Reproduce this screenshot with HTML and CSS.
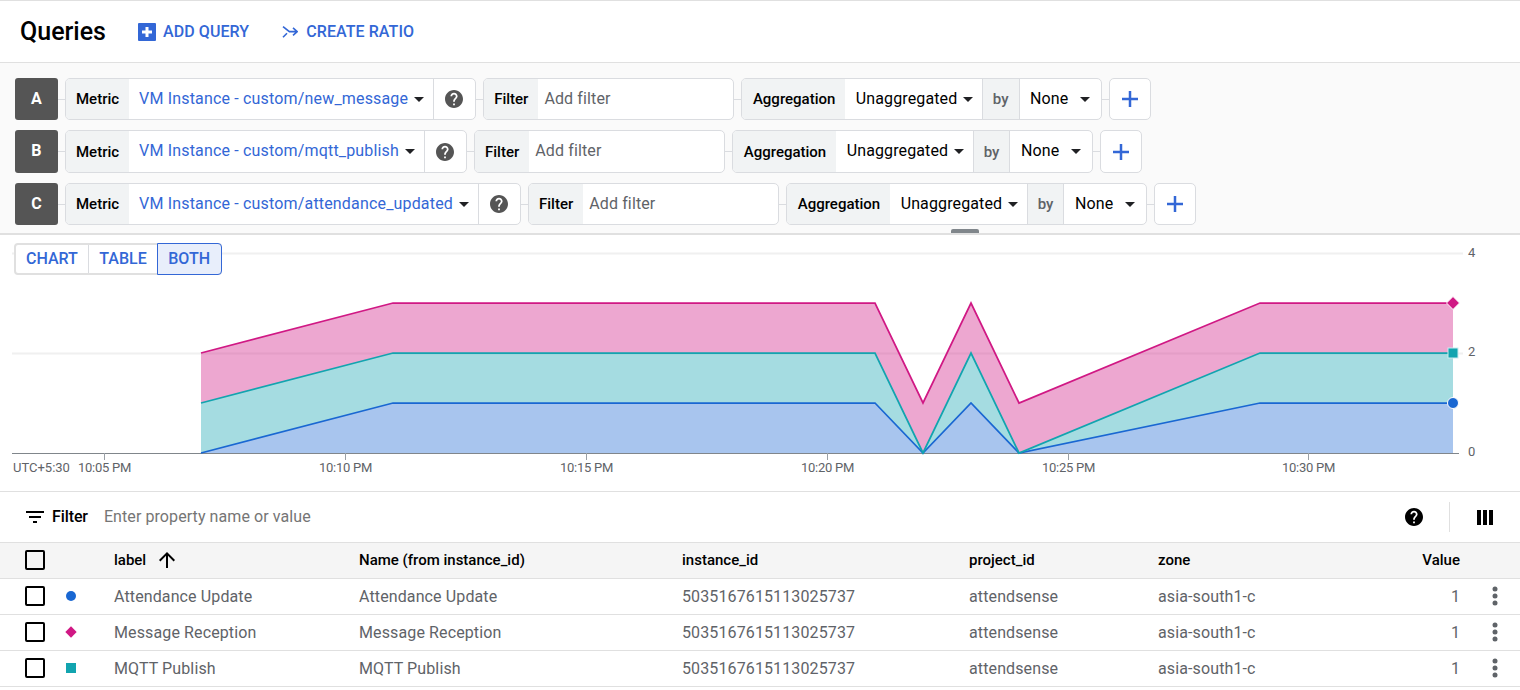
FILE: index.html
```html
<!DOCTYPE html>
<html>
<head>
    <meta charset="UTF-8">
    <meta name="viewport" content="width=device-width, initial-scale=1.0">
    <title>Queries</title>
    <link rel="stylesheet" href="styles.css">
</head>
<body>
    <svg class="defs" width="0" height="0">
        <symbol id="help" viewBox="2 2 20 20"><path d="M12 2C6.48 2 2 6.48 2 12s4.48 10 10 10 10-4.48 10-10S17.52 2 12 2zm1 17h-2v-2h2v2zm2.07-7.75l-.9.92C13.45 12.9 13 13.5 13 15h-2v-.5c0-1.1.45-2.1 1.17-2.83l1.24-1.26c.37-.36.59-.86.59-1.41 0-1.1-.9-2-2-2s-2 .9-2 2H8c0-2.21 1.79-4 4-4s4 1.79 4 4c0 .88-.36 1.68-.93 2.25z"/></symbol>
        <symbol id="plus" viewBox="0 0 18 18"><path d="M7.75 1h2.5v6.75H17v2.5h-6.75V17h-2.5v-6.75H1v-2.5h6.75z"/></symbol>
        <symbol id="kebab" viewBox="0 0 6 20"><circle cx="3" cy="3" r="2.5"/><circle cx="3" cy="10" r="2.5"/><circle cx="3" cy="17" r="2.5"/></symbol>
    </svg>

    <header class="top-bar">
        <h1>Queries</h1>
        <a class="top-action add-query">
            <svg class="add-icon" width="18" height="18" viewBox="0 0 18 18"><rect width="18" height="18" rx="1" fill="#3367d6"/><path d="M7.5 4h3v3.5H14v3h-3.5V14h-3v-3.5H4v-3h3.5z" fill="#fff"/></svg>
            ADD QUERY
        </a>
        <a class="top-action create-ratio">
            <svg class="ratio-icon" width="16" height="12" viewBox="0 0 16 12" fill="none" stroke="#3367d6" stroke-width="1.6"><path d="M1 .6 7.4 5.6H15M11 1.8l4.2 3.8L11 9.4M1 11.2l4-4"/></svg>
            CREATE RATIO
        </a>
    </header>

    <section class="queries">
        <div class="query-row">
            <span class="query-letter">A</span><span class="link"></span>
            <div class="group"><span class="tag">Metric</span><span class="select metric">VM Instance - custom/new_message<i class="caret"></i></span><span class="help-cell"><svg class="help-icon"><use href="#help"/></svg></span></div><span class="link"></span>
            <div class="group"><span class="tag">Filter</span><span class="filter-input">Add filter</span></div><span class="link"></span>
            <div class="group"><span class="tag tag-agg">Aggregation</span><span class="select">Unaggregated<i class="caret"></i></span><span class="tag tag-by">by</span><span class="select select-none">None<i class="caret"></i></span></div><span class="link"></span>
            <div class="group plus-box"><svg class="plus-icon"><use href="#plus"/></svg></div>
        </div>
        <div class="query-row row-tall">
            <span class="query-letter">B</span><span class="link"></span>
            <div class="group"><span class="tag">Metric</span><span class="select metric">VM Instance - custom/mqtt_publish<i class="caret"></i></span><span class="help-cell"><svg class="help-icon"><use href="#help"/></svg></span></div><span class="link"></span>
            <div class="group"><span class="tag">Filter</span><span class="filter-input">Add filter</span></div><span class="link"></span>
            <div class="group"><span class="tag tag-agg">Aggregation</span><span class="select">Unaggregated<i class="caret"></i></span><span class="tag tag-by">by</span><span class="select select-none">None<i class="caret"></i></span></div><span class="link"></span>
            <div class="group plus-box"><svg class="plus-icon"><use href="#plus"/></svg></div>
        </div>
        <div class="query-row">
            <span class="query-letter">C</span><span class="link"></span>
            <div class="group"><span class="tag">Metric</span><span class="select metric">VM Instance - custom/attendance_updated<i class="caret"></i></span><span class="help-cell"><svg class="help-icon"><use href="#help"/></svg></span></div><span class="link"></span>
            <div class="group"><span class="tag">Filter</span><span class="filter-input">Add filter</span></div><span class="link"></span>
            <div class="group"><span class="tag tag-agg">Aggregation</span><span class="select">Unaggregated<i class="caret"></i></span><span class="tag tag-by">by</span><span class="select select-none">None<i class="caret"></i></span></div><span class="link"></span>
            <div class="group plus-box"><svg class="plus-icon"><use href="#plus"/></svg></div>
        </div>
        <span class="drag-handle"></span>
    </section>

    <section class="chart">
        <div class="view-toggle">
            <span class="view-btn">CHART</span>
            <span class="view-btn">TABLE</span>
            <span class="view-btn active">BOTH</span>
        </div>
        <!-- y values in the chart are page y minus 235 -->
        <svg class="plot" width="1520" height="256" viewBox="0 0 1520 256">
            <path d="M12 18.5H1463M12 118.5H1463" stroke="#f0f0f0" stroke-width="2" fill="none"/>
            <polygon points="201,218 393,168 875,168 923,218 971,168 1019,218 1260,168 1453,168 1453,218" fill="#1967d2" fill-opacity=".38"/>
            <polygon points="201,168 393,118 875,118 923,218 971,118 1019,218 1260,118 1453,118 1453,168 1260,168 1019,218 971,168 923,218 875,168 393,168 201,218" fill="#12a4af" fill-opacity=".38"/>
            <polygon points="201,118 393,68 875,68 923,168 971,68 1019,168 1260,68 1453,68 1453,118 1260,118 1019,218 971,118 923,218 875,118 393,118 201,168" fill="#d01884" fill-opacity=".38"/>
            <path d="M12 218.5H1459" stroke="#80868b" stroke-width="1" fill="none"/>
            <path d="M104.5 218v7M345.5 218v7M586.5 218v7M827.5 218v7M1068.5 218v7M1308.5 218v7" stroke="#9aa0a6" fill="none"/>
            <polyline points="201,218 393,168 875,168 923,218 971,168 1019,218 1260,168 1453,168" stroke="#1967d2" stroke-width="1.75" fill="none"/>
            <polyline points="201,168 393,118 875,118 923,218 971,118 1019,218 1260,118 1453,118" stroke="#12a4af" stroke-width="1.75" fill="none"/>
            <polyline points="201,118 393,68 875,68 923,168 971,68 1019,168 1260,68 1453,68" stroke="#d01884" stroke-width="1.75" fill="none"/>
            <polygon points="1453,61.5 1459.5,68 1453,74.5 1446.5,68" fill="#d01884" stroke="#fff"/>
            <rect x="1448" y="113" width="10" height="10" fill="#12a4af" stroke="#c9ecef"/>
            <circle cx="1453" cy="168" r="5.5" fill="#1967d2" stroke="#fff"/>
            <g class="axis-text">
                <text x="13" y="237">UTC+5:30</text>
                <g class="time-text">
                    <text x="104.5" y="237" text-anchor="middle">10:05 PM</text>
                    <text x="345.5" y="237" text-anchor="middle">10:10 PM</text>
                    <text x="586.5" y="237" text-anchor="middle">10:15 PM</text>
                    <text x="827.5" y="237" text-anchor="middle">10:20 PM</text>
                    <text x="1068.5" y="237" text-anchor="middle">10:25 PM</text>
                    <text x="1308.5" y="237" text-anchor="middle">10:30 PM</text>
                </g>
                <text x="1468" y="22">4</text>
                <text x="1468" y="121">2</text>
                <text x="1468" y="221">0</text>
            </g>
        </svg>
    </section>

    <section class="filter-bar">
        <svg class="filter-icon" width="18" height="12" viewBox="3 6 18 12"><path d="M10 18h4v-2h-4v2zM3 6v2h18V6H3zm3 7h12v-2H6v2z"/></svg>
        <span class="filter-label">Filter</span>
        <span class="filter-hint">Enter property name or value</span>
        <svg class="bar-help"><use href="#help"/></svg>
        <span class="bar-divider"></span>
        <svg class="columns-icon" width="16" height="15" viewBox="0 0 16 15"><path d="M0 0h4v15H0zM6 0h4v15H6zM12 0h4v15h-4z"/></svg>
    </section>

    <table class="results">
        <thead>
            <tr>
                <th class="col-check"><span class="checkbox"></span></th>
                <th class="col-key"></th>
                <th class="col-label">label<svg class="sort-icon" width="16" height="16" viewBox="4 4 16 16"><path d="M4 12l1.41 1.41L11 7.83V20h2V7.83l5.58 5.59L20 12l-8-8-8 8z"/></svg></th>
                <th class="col-name">Name (from instance_id)</th>
                <th class="col-id">instance_id</th>
                <th class="col-project">project_id</th>
                <th class="col-zone">zone</th>
                <th class="col-value">Value</th>
                <th class="col-menu"></th>
            </tr>
        </thead>
        <tbody>
            <tr>
                <td><span class="checkbox"></span></td>
                <td><span class="key key-circle"></span></td>
                <td>Attendance Update</td>
                <td>Attendance Update</td>
                <td>5035167615113025737</td>
                <td>attendsense</td>
                <td>asia-south1-c</td>
                <td class="num">1</td>
                <td><svg class="kebab-icon"><use href="#kebab"/></svg></td>
            </tr>
            <tr>
                <td><span class="checkbox"></span></td>
                <td><span class="key key-diamond"></span></td>
                <td>Message Reception</td>
                <td>Message Reception</td>
                <td>5035167615113025737</td>
                <td>attendsense</td>
                <td>asia-south1-c</td>
                <td class="num">1</td>
                <td><svg class="kebab-icon"><use href="#kebab"/></svg></td>
            </tr>
            <tr>
                <td><span class="checkbox"></span></td>
                <td><span class="key key-square"></span></td>
                <td>MQTT Publish</td>
                <td>MQTT Publish</td>
                <td>5035167615113025737</td>
                <td>attendsense</td>
                <td>asia-south1-c</td>
                <td class="num">1</td>
                <td><svg class="kebab-icon"><use href="#kebab"/></svg></td>
            </tr>
        </tbody>
    </table>
</body>
</html>
```

FILE: styles.css
```css
body {
    margin: 0;
    background-color: #fff;
    color: #202124;
    font-family: Roboto, "Liberation Sans", sans-serif;
    font-size: 16px;
    letter-spacing: .12px;
    overflow: hidden;
}

.defs {
    position: absolute;
}

.top-bar {
    display: flex;
    align-items: center;
    height: 61px;
    padding-left: 20px;
    border-top: 1px solid #e0e0e0;
    border-bottom: 1px solid #e0e0e0;
}

.top-bar h1 {
    margin: 0 32px 0 0;
    font-size: 25px;
    font-weight: 500;
    letter-spacing: 0;
    color: #000;
}

.top-action {
    display: flex;
    align-items: center;
    gap: 7px;
    color: #3367d6;
    font-weight: 500;
    letter-spacing: .08px;
}

.add-query {
    margin-right: 33px;
}

.create-ratio {
    gap: 8px;
}

.queries {
    position: relative;
    display: flex;
    flex-direction: column;
    gap: 10px;
    height: 155px;
    padding: 15px 0 0 15px;
    background-color: #fafafa;
    border-bottom: 2px solid #e0e0e0;
}

.query-row {
    display: flex;
    height: 42px;
}

.row-tall {
    height: 43px;
}

.query-letter {
    display: flex;
    align-items: center;
    justify-content: center;
    width: 43px;
    padding-bottom: 2px;
    box-sizing: border-box;
    border-radius: 3px;
    background-color: #555;
    color: #fff;
    font-weight: 700;
}

.link {
    align-self: center;
    width: 7px;
    height: 1px;
    background-color: #dadce0;
}

.group {
    display: flex;
    box-sizing: border-box;
    border: 1px solid #dadce0;
    border-radius: 5px;
    background-color: #fff;
    overflow: hidden;
}

.tag {
    display: flex;
    align-items: center;
    padding: 0 10px;
    background-color: #f1f3f4;
    color: #000;
    font-size: 15px;
    font-weight: 500;
    letter-spacing: 0;
}

.tag-agg {
    padding: 0 9.5px 0 10.5px;
}

.tag-by {
    padding: 0 10px;
    border-left: 1px solid #dadce0;
    border-right: 1px solid #dadce0;
    color: #5f6368;
}

.select {
    display: flex;
    align-items: center;
    gap: 6px;
    padding: 0 8.5px 2px 11px;
    color: #000;
}

.select-none {
    gap: 12px;
    padding: 0 10.5px 2px 10.5px;
}

.metric {
    padding: 0 9px 2px 10px;
    color: #3367d6;
    letter-spacing: .17px;
}

.caret {
    width: 0;
    height: 0;
    margin-top: 2px;
    border-left: 5px solid transparent;
    border-right: 5px solid transparent;
    border-top: 5px solid #202124;
}

.help-cell {
    display: flex;
    align-items: center;
    justify-content: center;
    box-sizing: border-box;
    width: 42px;
    padding-right: 2px;
    border-left: 1px solid #dadce0;
}

.help-icon {
    width: 18px;
    height: 18px;
    fill: #555;
}

.filter-input {
    display: flex;
    align-items: center;
    width: 189px;
    padding: 0 0 2px 6px;
    color: #5f6368;
}

.plus-box {
    align-items: center;
    justify-content: center;
    width: 42px;
}

.plus-icon {
    width: 18px;
    height: 18px;
    fill: #3367d6;
}

.drag-handle {
    position: absolute;
    left: 951px;
    bottom: 0;
    width: 28px;
    height: 4px;
    border-radius: 2px 2px 0 0;
    background-color: #80868b;
}

.chart {
    position: relative;
    height: 256px;
    border-bottom: 1px solid #e0e0e0;
}

.plot {
    display: block;
}

.axis-text text {
    font-size: 13px;
    letter-spacing: 0;
    fill: #5f6368;
}

.axis-text .time-text text {
    letter-spacing: -.25px;
}

.view-toggle {
    position: absolute;
    left: 14px;
    top: 8px;
    display: flex;
    height: 28px;
    border: 2px solid #e0e0e0;
    border-radius: 4px;
    background-color: #fff;
    color: #3367d6;
    font-weight: 500;
    letter-spacing: 0;
}

.view-btn {
    display: flex;
    align-items: center;
    padding: 0 10px 1px;
    border-left: 1px solid #dadce0;
}

.view-btn:first-child {
    border-left: none;
}

.view-btn + .view-btn {
    padding-left: 10.5px;
}

.view-btn.active {
    padding: 0 10.5px 1px;
    border: 1.5px solid #3367d6;
    border-radius: 0 4px 4px 0;
    margin: -2px -2px -2px 0;
    background-color: #e8eefb;
}

.filter-bar {
    display: flex;
    align-items: center;
    height: 50px;
    padding-left: 26px;
    border-bottom: 1px solid #e0e0e0;
}

.filter-label {
    margin: 0 0 2px 8px;
    font-weight: 500;
    letter-spacing: -.1px;
    color: #000;
}

.filter-hint {
    margin: 0 0 2px 16px;
    letter-spacing: .08px;
    color: #757575;
}

.bar-help {
    width: 18px;
    height: 18px;
    margin-left: auto;
}

.bar-divider {
    width: 1px;
    height: 30px;
    margin: 0 27px 0 26px;
    background-color: #e0e0e0;
}

.columns-icon {
    margin-right: 27px;
}

.results {
    width: 1520px;
    border-collapse: collapse;
    table-layout: fixed;
}

.results th, .results td {
    padding: 0;
    border-bottom: 1px solid #e0e0e0;
    text-align: left;
    white-space: nowrap;
}

.results th {
    height: 35px;
    padding-bottom: 1px;
    box-sizing: border-box;
    background-color: #f5f5f5;
    color: #000;
    font-size: 15px;
    font-weight: 500;
    letter-spacing: 0;
}

.results td {
    height: 35px;
    color: #5f6368;
}

.col-check { width: 59px; }
.col-key { width: 55px; }
.col-label { width: 245px; }
.col-name { width: 323px; }
.col-id { width: 287px; }
.col-project { width: 189px; }
.col-zone { width: 240px; }
.col-value { width: 62px; }

.results .col-value, .results .num {
    text-align: right;
}

.checkbox {
    display: block;
    box-sizing: border-box;
    width: 20px;
    height: 20px;
    margin-left: 25px;
    border: 2px solid #000;
    border-radius: 2px;
}

.results th .checkbox {
    margin-top: 1px;
}

.sort-icon {
    margin-left: 13px;
    vertical-align: -3px;
}

.key {
    display: block;
    margin-left: 7px;
    width: 10px;
    height: 10px;
}

.key-circle {
    border-radius: 50%;
    background-color: #1967d2;
}

.key-diamond {
    width: 8px;
    height: 8px;
    margin-left: 8px;
    background-color: #d01884;
    transform: rotate(45deg);
}

.key-square {
    background-color: #12a4af;
}

.kebab-icon {
    display: block;
    width: 6px;
    height: 20px;
    margin-left: 32px;
    fill: #5f6368;
}
```
